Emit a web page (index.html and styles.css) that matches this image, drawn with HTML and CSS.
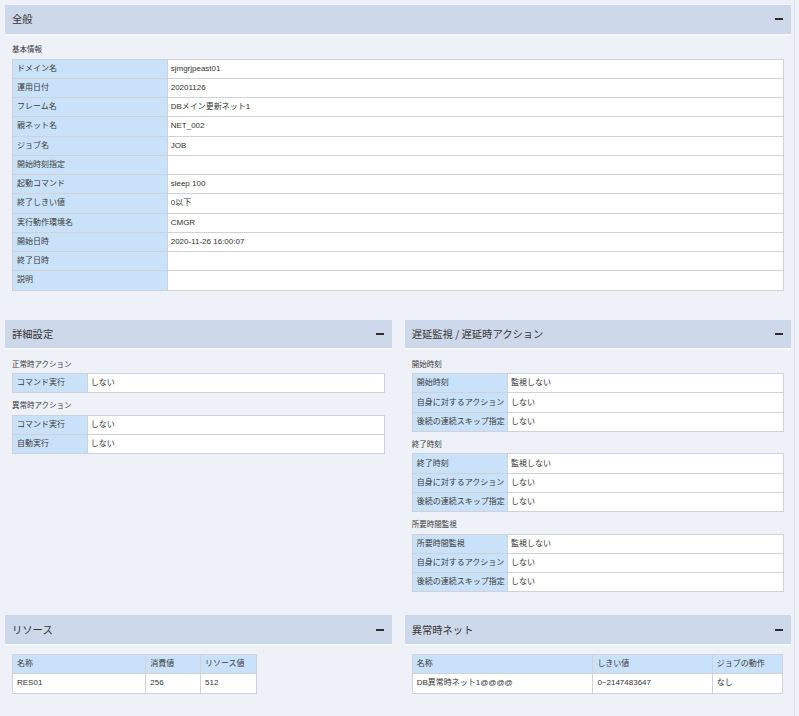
FILE: index.html
```html
<!DOCTYPE html>
<html lang="ja">
<head>
<meta charset="utf-8">
<title>ジョブ詳細</title>
<link rel="stylesheet" href="styles.css">
</head>
<body>
<div class="page">
  <section class="panel panel-top">
    <div class="panel-head"><span class="panel-title">全般</span><span class="minus"></span></div>
    <div class="panel-body">
      <div class="sub-label">基本情報</div>
      <table class="kv kv-main">
        <colgroup><col class="c-main-k"><col></colgroup>
        <tr><td class="k">ドメイン名</td><td>sjmgrjpeast01</td></tr>
        <tr><td class="k">運用日付</td><td>20201126</td></tr>
        <tr><td class="k">フレーム名</td><td>DBメイン更新ネット1</td></tr>
        <tr><td class="k">親ネット名</td><td>NET_002</td></tr>
        <tr><td class="k">ジョブ名</td><td>JOB</td></tr>
        <tr><td class="k">開始時刻指定</td><td></td></tr>
        <tr><td class="k">起動コマンド</td><td>sleep 100</td></tr>
        <tr><td class="k">終了しきい値</td><td>0以下</td></tr>
        <tr><td class="k">実行動作環境名</td><td>CMGR</td></tr>
        <tr><td class="k">開始日時</td><td>2020-11-26 16:00:07</td></tr>
        <tr><td class="k">終了日時</td><td></td></tr>
        <tr><td class="k">説明</td><td></td></tr>
      </table>
    </div>
  </section>

  <div class="row row-mid">
    <section class="panel">
      <div class="panel-head"><span class="panel-title">詳細設定</span><span class="minus"></span></div>
      <div class="panel-body">
        <div class="sub-label">正常時アクション</div>
        <table class="kv">
          <colgroup><col class="c-detail-k"><col></colgroup>
          <tr><td class="k">コマンド実行</td><td>しない</td></tr>
        </table>
        <div class="sub-label">異常時アクション</div>
        <table class="kv">
          <colgroup><col class="c-detail-k"><col></colgroup>
          <tr><td class="k">コマンド実行</td><td>しない</td></tr>
          <tr><td class="k">自動実行</td><td>しない</td></tr>
        </table>
      </div>
    </section>
    <section class="panel">
      <div class="panel-head"><span class="panel-title">遅延監視 / 遅延時アクション</span><span class="minus"></span></div>
      <div class="panel-body">
        <div class="sub-label">開始時刻</div>
        <table class="kv">
          <colgroup><col class="c-delay-k"><col></colgroup>
          <tr><td class="k">開始時刻</td><td>監視しない</td></tr>
          <tr><td class="k">自身に対するアクション</td><td>しない</td></tr>
          <tr><td class="k">後続の連続スキップ指定</td><td>しない</td></tr>
        </table>
        <div class="sub-label">終了時刻</div>
        <table class="kv">
          <colgroup><col class="c-delay-k"><col></colgroup>
          <tr><td class="k">終了時刻</td><td>監視しない</td></tr>
          <tr><td class="k">自身に対するアクション</td><td>しない</td></tr>
          <tr><td class="k">後続の連続スキップ指定</td><td>しない</td></tr>
        </table>
        <div class="sub-label">所要時間監視</div>
        <table class="kv">
          <colgroup><col class="c-delay-k"><col></colgroup>
          <tr><td class="k">所要時間監視</td><td>監視しない</td></tr>
          <tr><td class="k">自身に対するアクション</td><td>しない</td></tr>
          <tr><td class="k">後続の連続スキップ指定</td><td>しない</td></tr>
        </table>
      </div>
    </section>
  </div>

  <div class="row row-bottom">
    <section class="panel">
      <div class="panel-head"><span class="panel-title">リソース</span><span class="minus"></span></div>
      <div class="panel-body panel-body-list">
        <table class="list list-res">
          <colgroup><col class="c-res-1"><col class="c-res-2"><col class="c-res-3"></colgroup>
          <tr class="list-head"><th>名称</th><th>消費値</th><th>リソース値</th></tr>
          <tr><td>RES01</td><td>256</td><td>512</td></tr>
        </table>
      </div>
    </section>
    <section class="panel">
      <div class="panel-head"><span class="panel-title">異常時ネット</span><span class="minus"></span></div>
      <div class="panel-body panel-body-list">
        <table class="list list-net">
          <colgroup><col class="c-net-1"><col class="c-net-2"><col class="c-net-3"></colgroup>
          <tr class="list-head"><th>名称</th><th>しきい値</th><th>ジョブの動作</th></tr>
          <tr><td>DB異常時ネット1@@@@</td><td>0~2147483647</td><td>なし</td></tr>
        </table>
      </div>
    </section>
  </div>
</div>
</body>
</html>
```

FILE: styles.css
```css
html, body {
  margin: 0;
  padding: 0;
  background: #eef1f7;
}

body {
  font-family: "Liberation Sans", "Noto Sans CJK JP", sans-serif;
  color: #333;
  font-size: 8px;
}

.page {
  box-sizing: border-box;
  width: 795px;
  min-height: 716px;
  padding: 5px 0 0 5px;
  border-right: 1px solid #dde1e9;
}

.panel {
  width: 786px;
}

.row {
  display: grid;
  grid-template-columns: 386.7px 386.3px;
  column-gap: 13px;
  width: 786px;
}

.row .panel {
  width: auto;
}

.panel-top {
  margin-bottom: 22px;
}

.row-mid {
  margin-bottom: 16px;
}

.panel-head {
  display: flex;
  align-items: center;
  justify-content: space-between;
  height: 28.6px;
  padding: 0 8px 0 7px;
  background: #cdd8ea;
  border-bottom: 2px solid #f7f8fb;
}

.panel-title {
  font-family: "Noto Sans CJK JP", "Liberation Sans", sans-serif;
  font-size: 10.3px;
  color: #353535;
  line-height: 1;
}

.minus {
  display: block;
  width: 8px;
  height: 2px;
  background: #2d2d2d;
}

.panel-body {
  padding: 7.5px 7px 7px 7px;
}

.panel-top .panel-body {
  padding-top: 7.5px;
}

.panel-body-list {
  padding-top: 8px;
}

.sub-label {
  font-family: "Noto Sans CJK JP", "Liberation Sans", sans-serif;
  font-size: 7.5px;
  line-height: 12px;
  height: 12px;
  margin: 6px 0 3.5px 0;
  color: #3a3a3a;
}

.sub-label:first-child {
  margin-top: 0;
}

.kv, .list {
  border-collapse: collapse;
  table-layout: fixed;
  width: 100%;
  background: #fff;
}

.kv tr, .list tr {
  height: 19.25px;
}

.kv td, .list td, .list th {
  border: 1px solid #cfd2d6;
  padding: 0 4px;
  line-height: 10px;
  font-size: 8px;
  font-weight: normal;
  text-align: left;
  vertical-align: middle;
  white-space: nowrap;
  overflow: hidden;
  color: #333;
}

.kv td.k {
  background: #c9e2fa;
  padding-left: 4px;
  color: #3a3a3a;
}

.kv td + td {
  padding-left: 3px;
}

.c-main-k { width: 154.7px; }
.c-detail-k { width: 74.7px; }
.c-delay-k { width: 95.3px; }

.list-head th {
  background: #c9e2fa;
  border-color: #cfd2d6;
  color: #3a3a3a;
}

.list-head th + th {
  border-left-color: #b9cfe6;
}

.list-res { width: 243.7px; }
.c-res-1 { width: 133.3px; }
.c-res-2 { width: 54.7px; }
.c-res-3 { width: 55.7px; }

.list-net { width: 370px; }
.c-net-1 { width: 180.7px; }
.c-net-2 { width: 119.3px; }
.c-net-3 { width: 70px; }
```
